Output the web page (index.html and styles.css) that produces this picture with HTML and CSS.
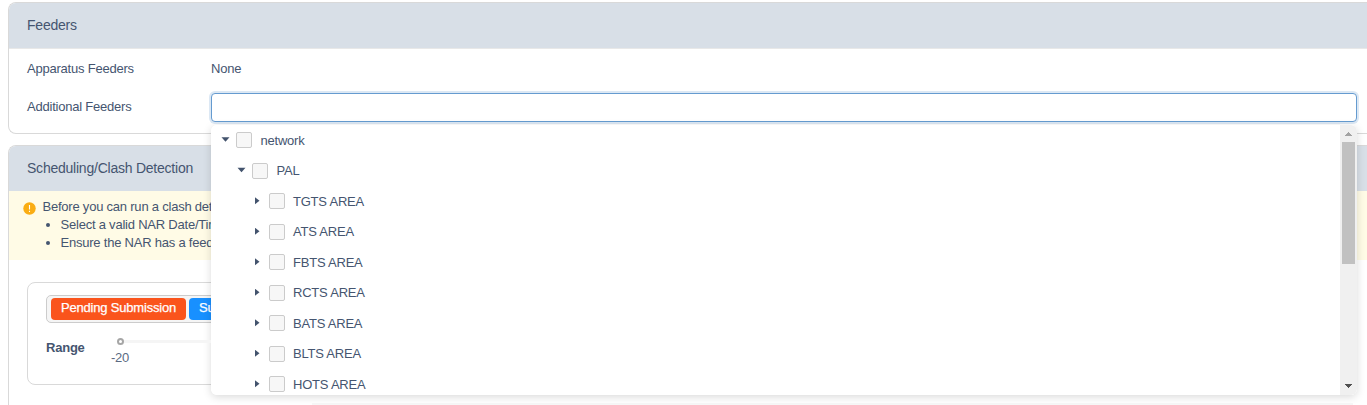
FILE: index.html
```html
<!DOCTYPE html>
<html lang="en">
<head>
<meta charset="utf-8">
<title>Feeders</title>
<link rel="stylesheet" href="styles.css">
</head>
<body>
<section class="card feeders">
  <h2 class="card-head">Feeders</h2>
  <div class="field"><span class="label">Apparatus Feeders</span><span>None</span></div>
  <div class="field field-select"><span class="label">Additional Feeders</span>
    <div class="select">
      <div class="select-box"></div>
      <div class="dropdown">
        <ul class="tree">
          <li class="node l0"><i class="caret open"></i><i class="check"></i><span>network</span></li>
          <li class="node l1"><i class="caret open"></i><i class="check"></i><span>PAL</span></li>
          <li class="node l2"><i class="caret"></i><i class="check"></i><span>TGTS AREA</span></li>
          <li class="node l2"><i class="caret"></i><i class="check"></i><span>ATS AREA</span></li>
          <li class="node l2"><i class="caret"></i><i class="check"></i><span>FBTS AREA</span></li>
          <li class="node l2"><i class="caret"></i><i class="check"></i><span>RCTS AREA</span></li>
          <li class="node l2"><i class="caret"></i><i class="check"></i><span>BATS AREA</span></li>
          <li class="node l2"><i class="caret"></i><i class="check"></i><span>BLTS AREA</span></li>
          <li class="node l2"><i class="caret"></i><i class="check"></i><span>HOTS AREA</span></li>
        </ul>
        <div class="scrollbar">
          <svg class="arrow" width="17" height="17" viewBox="0 0 17 17" shape-rendering="crispEdges"><path fill="#a3a3a3" d="M8 7h1v1h1v1h1v1h1v1H5v-1h1V9h1V8h1z"/></svg>
          <div class="thumb"></div>
          <svg class="arrow down" width="17" height="17" viewBox="0 0 17 17" shape-rendering="crispEdges"><path fill="#505050" d="M5 6h7v1h-1v1h-1v1H9v1H8V9H7V8H6V7H5z"/></svg>
        </div>
      </div>
    </div>
  </div>
</section>
<section class="card schedule">
  <h2 class="card-head">Scheduling/Clash Detection</h2>
  <div class="alert">
    <svg class="warn" width="13" height="13" viewBox="0 0 13 13"><circle cx="6.5" cy="6.5" r="6.2" fill="#faad14"/><path d="M6.5 3v4.4M6.5 8.7v1.2" stroke="#fff" stroke-width="1.1"/></svg>
    <div>Before you can run a clash detection:
      <ul class="steps"><li>Select a valid NAR Date/Time</li><li>Ensure the NAR has a feeder</li></ul>
    </div>
  </div>
  <div class="panel">
    <div class="tags"><span class="tag pending">Pending Submission</span><span class="tag submitted">Submitted</span></div>
    <div class="range"><b>Range</b>
      <div class="slider"><div class="rail"></div><div class="handle"></div><span class="mark">-20</span></div>
    </div>
  </div>
  <div class="rule"></div>
</section>
</body>
</html>
```
FILE: styles.css
```css
* { box-sizing: border-box; }
body { margin: 0; height: 405px; overflow: hidden; padding: 2px 0 0 8px; background: #fff; color: #455570; font: 13px/18px "Liberation Sans", Arial, sans-serif; letter-spacing: -.22px; }
ul { list-style: none; margin: 0; padding: 0; }
.card { border: 1px solid #d9d9d9; border-right: 0; border-radius: 8px 0 0 8px; width: 1359px; }
.card-head { margin: 0; height: 46px; padding-left: 18px; background: #d8dfe7; border-bottom: 1px solid #e8e8e8; border-radius: 7px 0 0 0; font-size: 14px; font-weight: 400; line-height: 45px; letter-spacing: -.23px; }
.feeders { height: 132px; margin-bottom: 11px; }
.field { display: flex; height: 38px; padding-left: 18px; line-height: 40px; }
.field-select { height: 37px; }
.label { width: 184px; }
.select { position: relative; width: 1146px; padding-top: 6px; }
.select-box { height: 29px; border: 1px solid #659bd0; border-radius: 4px; box-shadow: 0 0 0 2px #dce8f4; background: #fff; }
.dropdown { position: absolute; z-index: 5; top: 38px; left: 0; display: flex; width: 1146px; height: 270px; border-radius: 6px; background: #fff; overflow: hidden; }
.select::after { content: ""; position: absolute; top: 38px; left: 0; width: 1146px; height: 270px; border-radius: 6px; box-shadow: 0 2px 8px rgba(0,0,0,.15); }
.tree { flex: 1; height: 270px; overflow: hidden; }
.node { display: flex; align-items: center; height: 30.5px; line-height: 20px; }
.node span { padding-top: 1px; }
.l0 { padding-left: 10px; }
.l1 { padding-left: 26px; }
.l2 { padding-left: 42.5px; }
.caret { width: 9px; height: 8px; margin: 0 6px 0 0; background: #43536d; clip-path: polygon(1.5px 0, 6px 3.5px, 1.5px 7px); }
.caret.open { clip-path: polygon(.5px 1px, 8.5px 1px, 4.5px 5.5px); }
.check { width: 16px; height: 16px; margin-right: 8.5px; border: 1px solid #cbcbcb; border-radius: 2px; background: #f7f7f7; }
.scrollbar { display: flex; flex-direction: column; align-items: center; width: 17px; background: #f0f0f0; }
.arrow { display: block; }
.thumb { width: 13px; height: 122px; background: #c1c1c1; }
.down { margin-top: auto; }
.schedule { height: 260px; border-bottom: 0; border-radius: 8px 0 0 0; }
.schedule .card-head { height: 45px; border-bottom: 0; }
.alert { display: flex; height: 69px; padding: 7px 0 0 14px; background: #fffbe6; }
.warn { margin: 4px 6.5px 0 0; }
.steps { list-style: disc; padding-left: 18px; }
.panel { width: 1320px; height: 103px; margin: 22px 0 0 18px; padding: 12px 18px; border: 1px solid #d9d9d9; border-radius: 8px; }
.tags { display: flex; gap: 3px; height: 28px; padding: 2px 4px; border: 1px solid #ccc; border-radius: 5px; background: #f5f5f5; }
.tag { height: 22px; padding: 0 10px; border-radius: 4px; color: #fff; line-height: 20px; white-space: nowrap; letter-spacing: -.19px; -webkit-text-stroke: .25px #fff; }
.pending { width: 135px; background: #fa541c; }
.submitted { background: #1890ff; }
.range { display: flex; margin-top: 15px; line-height: 20px; }
.range b { width: 65px; }
.slider { position: relative; width: 1100px; }
.rail { height: 3px; margin: 2px 0 0 9px; background: #f5f5f5; }
.handle { position: absolute; top: 0; left: 6px; width: 7px; height: 7px; border: 2px solid #a6a6a6; border-radius: 50%; background: #fff; }
.mark { position: absolute; top: 11px; left: 0; line-height: 17px; color: #5a6a82; }
.rule { height: 2px; margin: 18px 14px 0 303px; background: #f7f7f7; }
```
